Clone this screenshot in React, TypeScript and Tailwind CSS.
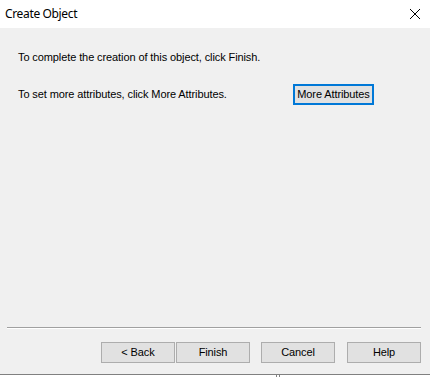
import React from 'react';

// Windows-style dialog button
const DlgButton: React.FC<{ label: string; className?: string }> = ({ label, className }) => (
  <button
    className={`h-[21px] w-[74px] bg-[#e1e1e1] border border-[#adadad] text-[11px] tracking-[-0.1px] text-black leading-none ${className ?? ''}`}
  >
    {label}
  </button>
);

const App: React.FC = () => {
  return (
    <div className="w-[430px] h-[377px] flex flex-col bg-white font-['Liberation_Sans',Arial,sans-serif] text-black">
      {/* 제목 표시줄 */}
      <div className="h-[28px] flex items-center justify-between bg-white">
        <span className="pl-[5px] text-[12px] font-['Noto_Sans',sans-serif] tracking-[-0.35px]">Create Object</span>
        <svg className="mr-[9px] w-[12px] h-[12px]" viewBox="0 0 12 12" stroke="#000" strokeWidth="1">
          <path d="M1 1L11 11M11 1L1 11" />
        </svg>
      </div>

      {/* 본문 */}
      <div className="h-[346px] bg-[#f0f0f0] flex flex-col">
        <div className="flex-1 pl-[18px] pt-[23px] text-[11px] tracking-[-0.1px]">
          <p className="leading-[13px]">To complete the creation of this object, click Finish.</p>
          <div className="flex items-center mt-[19px]">
            <p className="w-[275px] leading-[13px]">To set more attributes, click More Attributes.</p>
            <button className="h-[21px] w-[81px] bg-[#e1e1e1] border-2 border-[#0078d7] text-[11px] tracking-[-0.1px] leading-none mt-[1px]">
              More Attributes
            </button>
          </div>
        </div>

        {/* 구분선 */}
        <div className="mx-[7px] w-[414px] border-t border-[#a0a0a0] border-b-white border-b" />

        <div className="flex pl-[101px] pt-[13px] pb-[11px]">
          <DlgButton label="< Back" />
          <DlgButton label="Finish" className="ml-[1px]" />
          <DlgButton label="Cancel" className="ml-[11px]" />
          <DlgButton label="Help" className="ml-[12px]" />
        </div>
      </div>

      <div className="h-[1px] bg-[#808080]" />
      <div className="flex-1 bg-white flex pl-[276px] gap-[2px]">
        <div className="w-[1px] bg-[#808080]" />
        <div className="w-[1px] bg-[#808080]" />
      </div>
    </div>
  );
};

export default App;
